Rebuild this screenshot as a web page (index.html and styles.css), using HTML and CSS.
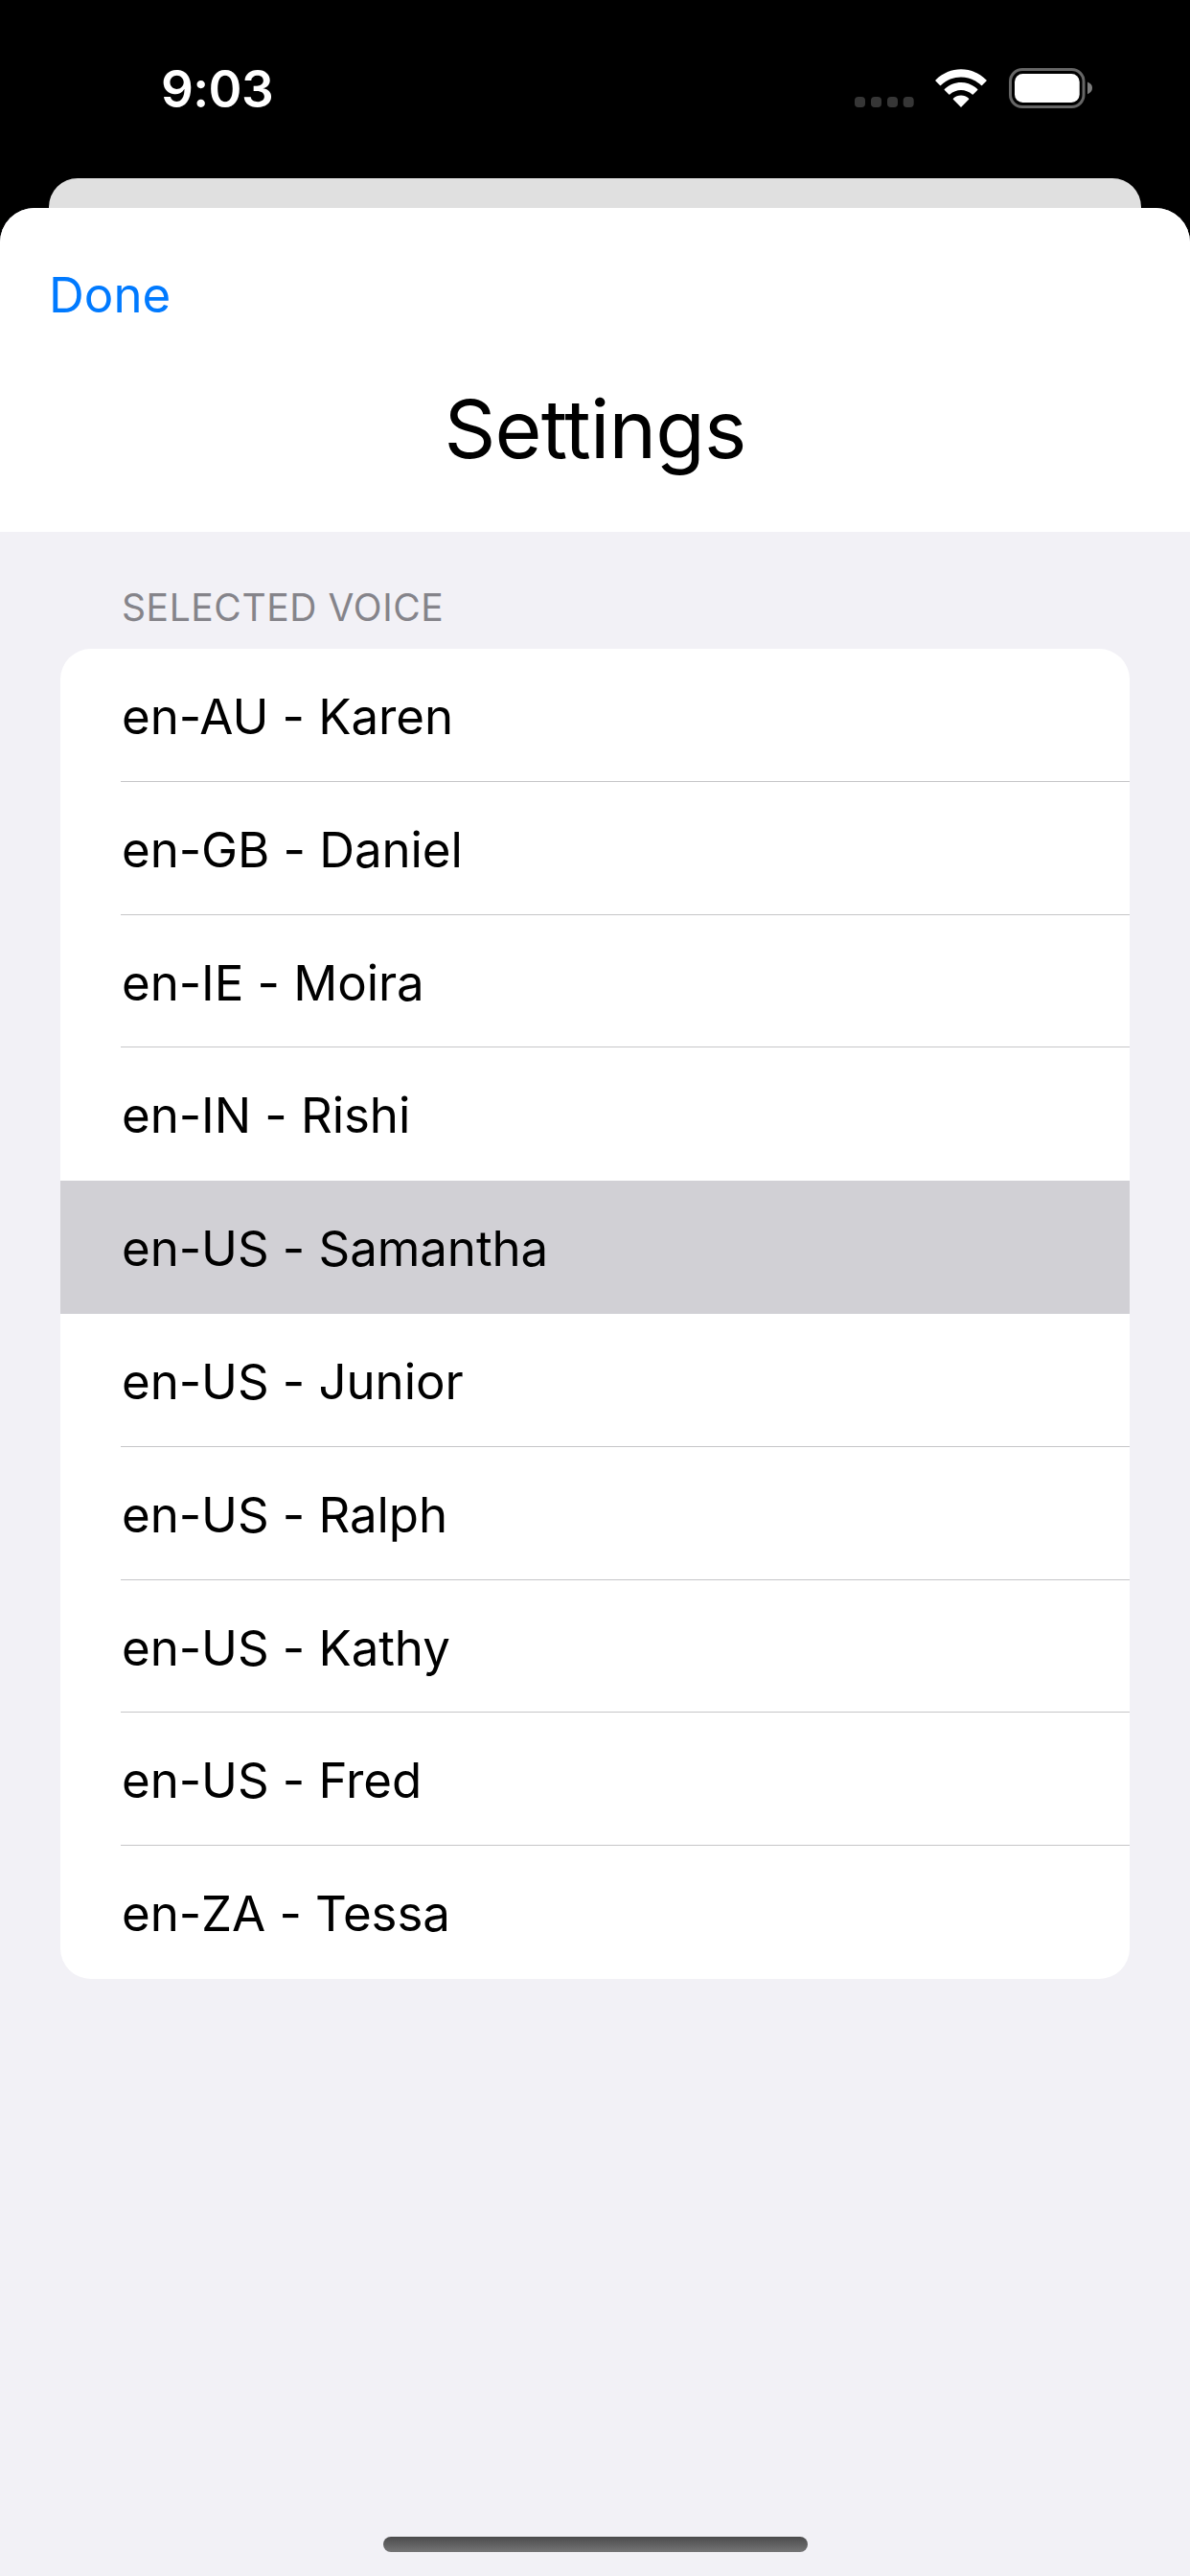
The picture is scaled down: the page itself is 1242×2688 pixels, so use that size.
FILE: index.html
```html
<!DOCTYPE html>
<html lang="en">
<head>
<meta charset="utf-8">
<title>Settings</title>
<link rel="stylesheet" href="styles.css">
</head>
<body>
<div class="screen">
  <header class="status">
    <span class="time">9:03</span>
    <div class="indicators">
      <svg class="dots" width="62" height="12" viewBox="0 0 62 12" fill="#363636"><rect width="11" height="11" rx="4"/><rect x="17" width="11" height="11" rx="4"/><rect x="34" width="11" height="11" rx="4"/><rect x="50.700" width="11" height="11" rx="4"/></svg>
      <svg class="wifi" width="54" height="41" viewBox="0 0 54 41" fill="#fff"><path d="M.5 11.500C15.500-3.500 38.500-3.500 53.500 11.500Q54 12 53.500 12.500L49 17Q48.500 17.500 48 17C36 5.800 18 5.800 6 17Q5.500 17.500 5 17L.5 12.500Q0 12 .5 11.500Z"/><path d="M9.800 21C19.500 11.500 34.500 11.500 44.200 21Q44.700 21.500 44.200 22L39.700 26.500Q39.200 27 38.700 26.500C32 20.500 22 20.500 15.300 26.500Q14.800 27 14.300 26.500L9.800 22Q9.300 21.500 9.800 21Z"/><path d="M18.900 30.700C23.500 26.500 30.500 26.500 35.100 30.700Q35.600 31.200 35.100 31.700L27.500 39.500Q27 40 26.500 39.500L18.900 31.700Q18.400 31.200 18.900 30.700Z"/></svg>
      <svg class="battery" width="88" height="42" viewBox="0 0 88 42"><rect x="1.500" y="1.500" width="76.500" height="39" rx="12.500" fill="none" stroke="#666" stroke-width="3"/><rect x="6" y="6" width="67.700" height="30" rx="8.500" fill="#fff"/><path d="M82 14.500Q87 16.500 87 20.800T82 27.200Z" fill="#7d7d7d"/></svg>
    </div>
  </header>
  <div class="back-sheet"></div>
  <main class="sheet">
    <nav class="top">
      <a class="done">Done</a>
      <h1 class="title">Settings</h1>
    </nav>
    <section class="content">
      <h2 class="label">SELECTED VOICE</h2>
      <ul class="voices">
        <li class="voice">en-AU - Karen</li>
        <li class="voice">en-GB - Daniel</li>
        <li class="voice">en-IE - Moira</li>
        <li class="voice plain">en-IN - Rishi</li>
        <li class="voice selected">en-US - Samantha</li>
        <li class="voice">en-US - Junior</li>
        <li class="voice">en-US - Ralph</li>
        <li class="voice">en-US - Kathy</li>
        <li class="voice">en-US - Fred</li>
        <li class="voice plain">en-ZA - Tessa</li>
      </ul>
    </section>
    <div class="home"></div>
  </main>
</div>
</body>
</html>
```
FILE: styles.css
```css
* { box-sizing: border-box; }
body { margin: 0; background: #000; font-family: Inter, "Liberation Sans", sans-serif; }
.screen { width: 1242px; height: 2688px; display: flex; flex-direction: column; background: #000; overflow: hidden; }
.status { height: 186px; flex: none; display: flex; justify-content: space-between; align-items: flex-start; padding: 61px 102px 0 168px; }
.time { color: #fff; font-size: 53px; font-weight: 600; line-height: 64px; letter-spacing: -0.6px; }
.indicators { display: flex; align-items: flex-start; padding-top: 10px; margin-right: -1px; }
.dots { margin: 30px 22px 0 0; }
.wifi { margin: 1px 23px 0 0; }
.back-sheet { height: 72px; flex: none; margin: 0 51px -41px; border-radius: 30px 30px 0 0; background: #e0e0e0; }
.sheet { flex: 1; display: flex; flex-direction: column; border-radius: 36px 36px 0 0; background: #f2f1f6; overflow: hidden; }
.top { height: 338px; flex: none; padding-top: 60px; background: #fff; }
.done { display: block; padding-left: 51px; font-size: 51px; line-height: 62px; color: #007aff; }
.title { margin: 58px 0 0; font-size: 84px; font-weight: 400; line-height: 102px; text-align: center; color: #000; letter-spacing: -0.8px; }
.content { flex: 1; padding: 55px 63px 0; }
.label { margin: 0; padding-left: 64px; height: 67px; font-size: 39px; font-weight: 400; line-height: 48px; color: #85848a; letter-spacing: 0.6px; }
.voices { margin: 0; padding: 0; list-style: none; background: #fff; border-radius: 32px; overflow: hidden; }
.voice { height: 138.800px; padding-left: 64px; font-size: 51px; line-height: 142px; color: #000; letter-spacing: -0.08px; background: linear-gradient(#c6c6c8, #c6c6c8) 63px 100% / 100% 1px no-repeat; }
.plain { background: none; }
.selected { background: #d1d0d5; }
.home { width: 443px; height: 16px; flex: none; margin: 0 auto 25px; border-radius: 8px; background: linear-gradient(#4b4b4c, #757576); }
```
